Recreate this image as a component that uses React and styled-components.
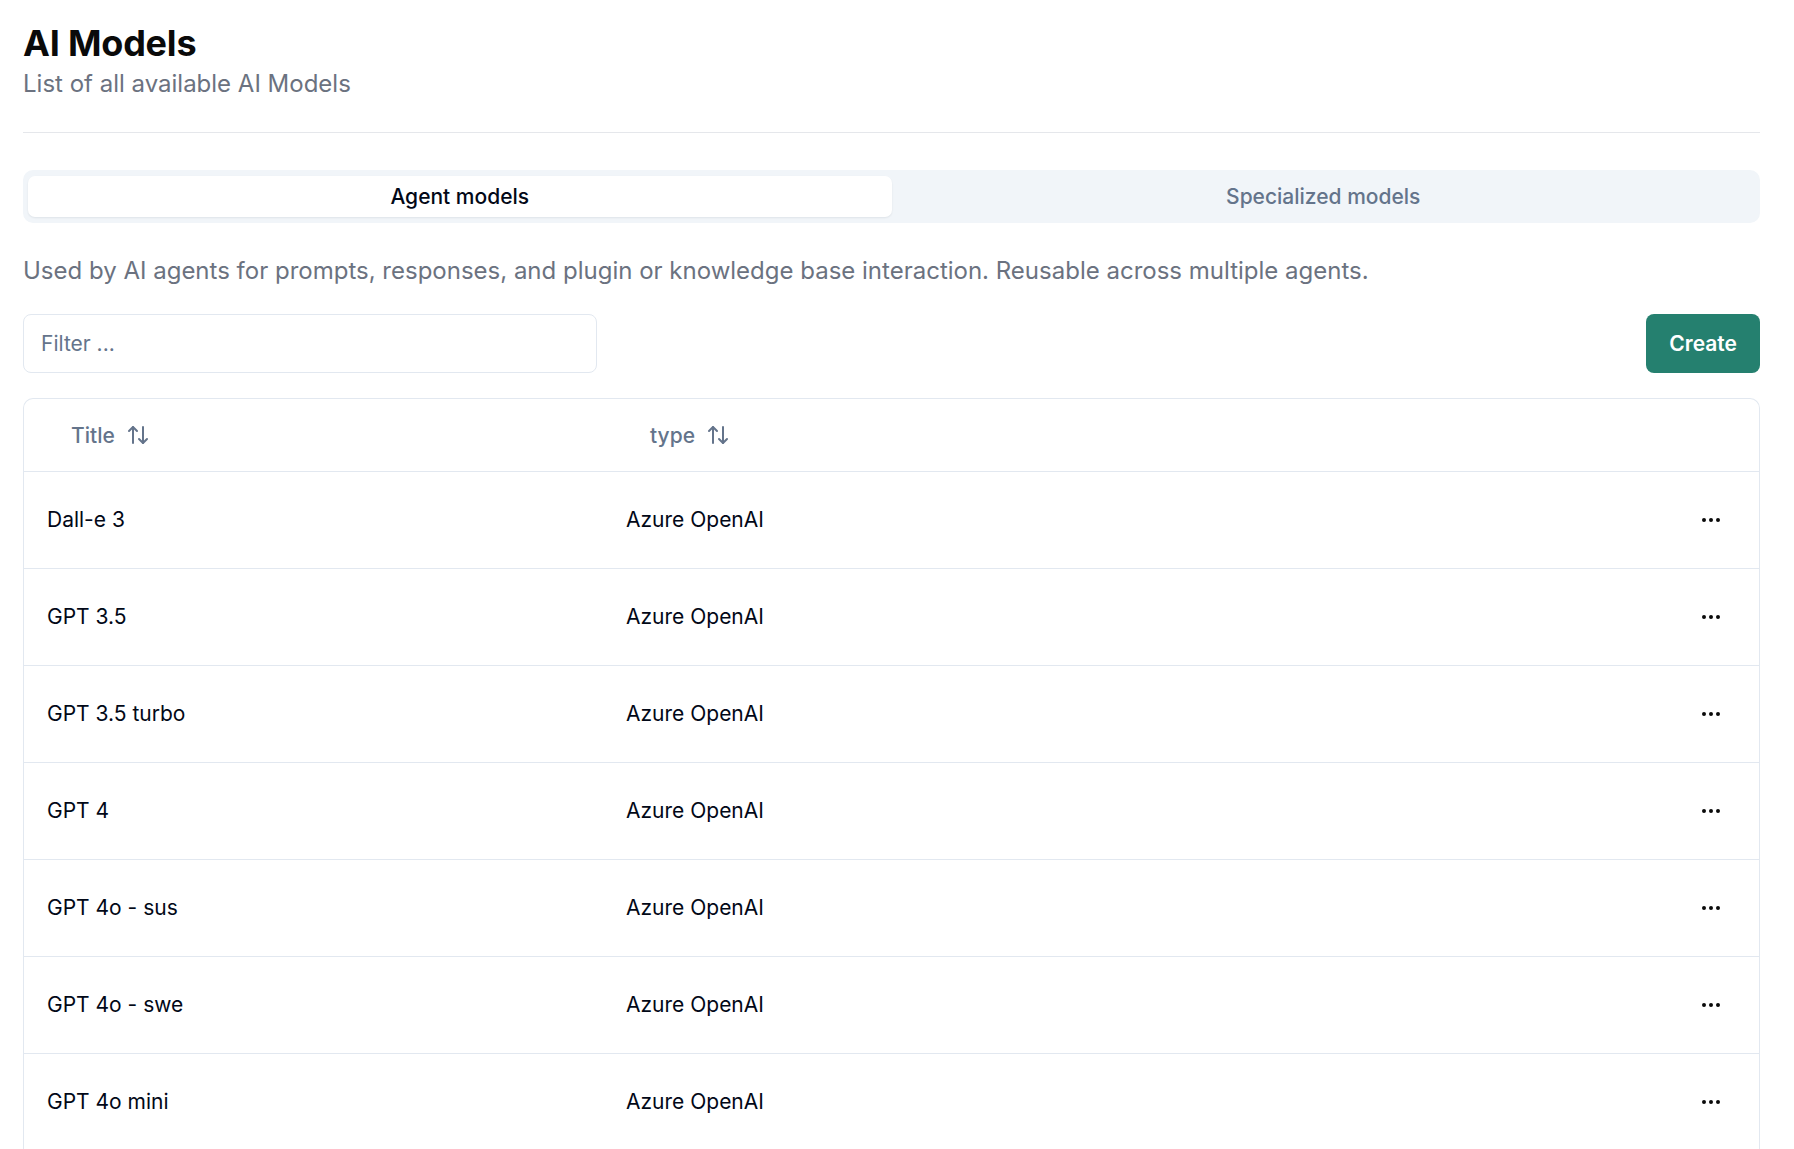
import React, { useState } from 'react'
import styled, { createGlobalStyle } from 'styled-components'
import { ArrowUpDown, Ellipsis } from 'lucide-react'

const GlobalStyle = createGlobalStyle`
  html, body {
    margin: 0;
    padding: 0;
    overflow: hidden;
    background: #ffffff;
  }
  body {
    font-family: Inter, "Noto Sans", "Liberation Sans", sans-serif;
    color: #020817;
  }
  * {
    box-sizing: border-box;
  }
`

const Page = styled.main`
  padding: 23px 34px 0 23px;
`

const Title = styled.h1`
  margin: 0;
  font-size: 36px;
  line-height: 40px;
  font-weight: 700;
  color: #0a0a0a;
  letter-spacing: -0.2px;
`

const Subtitle = styled.p`
  margin: 5px 0 0;
  font-size: 24px;
  line-height: 32px;
  color: #6b7280;
`

const Divider = styled.hr`
  margin: 32px 0 0;
  border: 0;
  border-top: 1px solid #e5e7eb;
`

const TabList = styled.div`
  margin-top: 37px;
  display: grid;
  grid-template-columns: 1fr 1fr;
  padding: 6px 5px;
  border-radius: 10px;
  background: #f1f5f9;
`

const Tab = styled.button`
  height: 41px;
  border: 0;
  border-radius: 7px;
  font-family: inherit;
  font-size: 21px;
  font-weight: 500;
  cursor: pointer;
  background: ${(p) => (p.$active ? '#ffffff' : 'transparent')};
  color: ${(p) => (p.$active ? '#020817' : '#64748b')};
  box-shadow: ${(p) => (p.$active ? '0 1px 2px rgba(15, 23, 42, 0.08)' : 'none')};
`

const Description = styled.p`
  margin: 32px 0 0;
  font-size: 24px;
  line-height: 32px;
  color: #6b7280;
`

const Toolbar = styled.div`
  margin-top: 27px;
  display: flex;
  justify-content: space-between;
  align-items: center;
`

const FilterInput = styled.input`
  width: 574px;
  height: 59px;
  padding: 0 17px;
  border: 1px solid #e2e8f0;
  border-radius: 8px;
  font-family: inherit;
  font-size: 21px;
  color: #020817;
  outline: none;

  &::placeholder {
    color: #64748b;
  }
`

const CreateButton = styled.button`
  height: 59px;
  padding: 0 23px;
  border: 0;
  border-radius: 8px;
  background: #25806f;
  color: #ffffff;
  font-family: inherit;
  font-size: 21px;
  font-weight: 600;
  cursor: pointer;
`

const TableBox = styled.div`
  margin-top: 25px;
  border: 1px solid #e2e8f0;
  border-bottom: 0;
  border-radius: 10px 10px 0 0;
`

const Row = styled.div`
  display: grid;
  grid-template-columns: 579px 1fr auto;
  align-items: center;
  height: ${(p) => (p.$head ? '73px' : '97px')};
  border-bottom: 1px solid #e2e8f0;
`

const Cell = styled.div`
  padding: 0 ${(p) => (p.$last ? '36px' : '23px')} 0 23px;
  font-size: 21px;
  line-height: 28px;
  color: #020817;
`

const SortButton = styled.button`
  display: inline-flex;
  align-items: center;
  gap: 11px;
  height: 44px;
  padding: 0 24px;
  border: 0;
  background: transparent;
  font-family: inherit;
  font-size: 21px;
  font-weight: 500;
  color: #64748b;
  cursor: pointer;
`

const MenuButton = styled.button`
  display: flex;
  align-items: center;
  padding: 0;
  border: 0;
  background: transparent;
  color: #0a0a0a;
  cursor: pointer;
`

const models = [
  { title: 'Dall-e 3', type: 'Azure OpenAI' },
  { title: 'GPT 3.5', type: 'Azure OpenAI' },
  { title: 'GPT 3.5 turbo', type: 'Azure OpenAI' },
  { title: 'GPT 4', type: 'Azure OpenAI' },
  { title: 'GPT 4o - sus', type: 'Azure OpenAI' },
  { title: 'GPT 4o - swe', type: 'Azure OpenAI' },
  { title: 'GPT 4o mini', type: 'Azure OpenAI' },
]

const App = () => {
  const [tab, setTab] = useState('agent')
  const [filter, setFilter] = useState('')

  const rows = models.filter((m) =>
    m.title.toLowerCase().includes(filter.toLowerCase())
  )

  return (
    <>
      <GlobalStyle />
      <Page>
        <Title>AI Models</Title>
        <Subtitle>List of all available AI Models</Subtitle>
        <Divider />

        <TabList>
          <Tab $active={tab === 'agent'} onClick={() => setTab('agent')}>
            Agent models
          </Tab>
          <Tab $active={tab === 'special'} onClick={() => setTab('special')}>
            Specialized models
          </Tab>
        </TabList>

        <Description>
          Used by AI agents for prompts, responses, and plugin or knowledge base
          interaction. Reusable across multiple agents.
        </Description>

        <Toolbar>
          <FilterInput
            placeholder="Filter ..."
            value={filter}
            onChange={(e) => setFilter(e.target.value)}
          />
          <CreateButton>Create</CreateButton>
        </Toolbar>

        <TableBox>
          <Row $head>
            <Cell>
              <SortButton>
                Title <ArrowUpDown size={24} strokeWidth={2} />
              </SortButton>
            </Cell>
            <Cell>
              <SortButton>
                type <ArrowUpDown size={24} strokeWidth={2} />
              </SortButton>
            </Cell>
            <Cell $last />
          </Row>
          {rows.map((m) => (
            <Row key={m.title}>
              <Cell>{m.title}</Cell>
              <Cell>{m.type}</Cell>
              <Cell $last>
                <MenuButton aria-label="Open menu">
                  <Ellipsis size={24} strokeWidth={2} />
                </MenuButton>
              </Cell>
            </Row>
          ))}
        </TableBox>
      </Page>
    </>
  )
}

export default App
